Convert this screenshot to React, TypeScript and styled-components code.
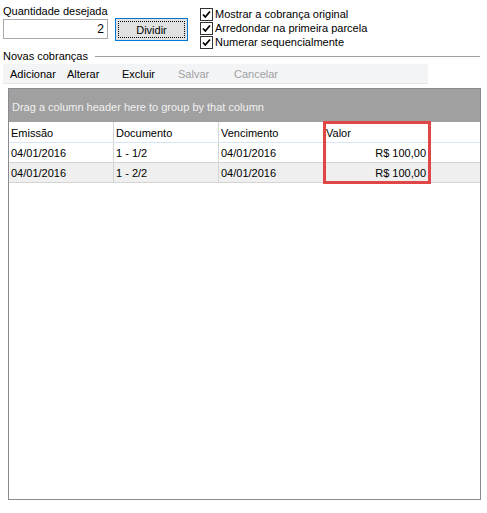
import React from 'react';
import styled, { createGlobalStyle } from 'styled-components';

const GlobalStyle = createGlobalStyle`
  html, body {
    margin: 0;
    padding: 0;
    background: #ffffff;
  }
  body {
    font-family: "Liberation Sans", Arial, sans-serif;
    font-size: 11px;
    color: #000000;
  }
`;

const Page = styled.div`
  width: 487px;
  height: 513px;
  box-sizing: border-box;
  padding: 4px 0 0 3px;
  display: flex;
  flex-direction: column;
  white-space: nowrap;
`;

const TopRow = styled.div`
  display: flex;
  align-items: flex-start;
  height: 44px;
`;

const QtyField = styled.div`
  display: flex;
  flex-direction: column;
  width: 105px;
`;

const Label = styled.span`
  height: 15px;
  line-height: 15px;
`;

const QtyInput = styled.div`
  box-sizing: border-box;
  height: 20px;
  border: 1px solid #a9a9a9;
  background: #ffffff;
  text-align: right;
  padding: 0 3px;
  line-height: 18px;
  font-size: 12px;
`;

const Button = styled.button`
  margin: 14px 0 0 7px;
  box-sizing: border-box;
  width: 73px;
  height: 23px;
  border: 1px solid #0078d7;
  background: #e1e1e1;
  padding: 2px;
  font-family: inherit;
  font-size: 11px;
  color: #000;
`;

const FocusRect = styled.span`
  display: flex;
  align-items: center;
  justify-content: center;
  height: 100%;
  box-sizing: border-box;
  border: 1px dotted #000;
`;

const Checks = styled.div`
  margin: 3px 0 0 12px;
  display: flex;
  flex-direction: column;
`;

const CheckRow = styled.label`
  display: flex;
  align-items: center;
  gap: 2px;
  height: 14px;
`;

const Box = styled.span`
  box-sizing: border-box;
  width: 13px;
  height: 13px;
  border: 1px solid #333;
  background: #fff;
  display: flex;
  align-items: center;
  justify-content: center;
`;

const Legend = styled.div`
  display: flex;
  align-items: center;
  height: 16px;
  padding-right: 7px;
`;

const LegendText = styled.span`
  padding-right: 7px;
`;

const LegendLine = styled.span`
  flex: 1;
  height: 1px;
  background: #a0a0a0;
  margin-top: 1px;
`;

const Toolbar = styled.div`
  width: 425px;
  height: 19px;
  background: #f3f4f6;
  border-bottom: 1px solid #e4e6e8;
  display: flex;
  align-items: center;
`;

const ToolItem = styled.span<{ $w: number; $disabled?: boolean }>`
  width: ${(p) => p.$w}px;
  padding-left: 7px;
  box-sizing: border-box;
  color: ${(p) => (p.$disabled ? '#a0a0a0' : '#000')};
`;

const Grid = styled.div`
  position: relative;
  margin: 4px 0 0 5px;
  width: 473px;
  height: 412px;
  box-sizing: border-box;
  border: 1px solid #8a8a90;
  background: #ffffff;
`;

const GroupPanel = styled.div`
  height: 33px;
  background: #a0a0a0;
  color: #f0f0f0;
  display: flex;
  align-items: center;
  padding: 2px 0 0 3px;
  box-sizing: border-box;
`;

const Row = styled.div<{ $alt?: boolean; $header?: boolean }>`
  display: flex;
  height: ${(p) => (p.$header ? 20 : 19)}px;
  background: ${(p) => (p.$alt ? '#efefef' : '#ffffff')};
  border-bottom: 1px solid ${(p) => (p.$header ? '#d5e5f3' : '#d4d4d4')};
`;

const Cell = styled.div<{ $right?: boolean; $header?: boolean }>`
  width: 105px;
  box-sizing: border-box;
  border-right: 1px solid #d4d4d4;
  padding: ${(p) => (p.$header ? 3 : 1)}px 2px 0;
  line-height: ${(p) => (p.$header ? 17 : 18)}px;
  text-align: ${(p) => (p.$right ? 'right' : 'left')};
  overflow: hidden;
`;

const Highlight = styled.div`
  position: absolute;
  left: 314px;
  top: 32px;
  width: 108px;
  height: 63px;
  box-sizing: border-box;
  border: 3px solid #e04646;
  pointer-events: none;
`;

const Check = () => (
  <Box>
    <svg width="9" height="9" viewBox="0 0 9 9">
      <path d="M1 4.5 L3.3 7 L8 1.5" fill="none" stroke="#000" strokeWidth="1.8" />
    </svg>
  </Box>
);

const options = ['Mostrar a cobrança original', 'Arredondar na primeira parcela', 'Numerar sequencialmente'];
const columns = ['Emissão', 'Documento', 'Vencimento', 'Valor'];

const rows = [
  { emissao: '04/01/2016', doc: '1 - 1/2', venc: '04/01/2016', valor: 'R$ 100,00' },
  { emissao: '04/01/2016', doc: '1 - 2/2', venc: '04/01/2016', valor: 'R$ 100,00' },
];

export default function App() {
  return (
    <>
      <GlobalStyle />
      <Page>
        <TopRow>
          <QtyField>
            <Label>Quantidade desejada</Label>
            <QtyInput>2</QtyInput>
          </QtyField>
          <Button>
            <FocusRect>Dividir</FocusRect>
          </Button>
          <Checks>
            {options.map((o) => (
              <CheckRow key={o}>
                <Check />
                {o}
              </CheckRow>
            ))}
          </Checks>
        </TopRow>
        <Legend>
          <LegendText>Novas cobranças</LegendText>
          <LegendLine />
        </Legend>
        <Toolbar>
          <ToolItem $w={57}>Adicionar</ToolItem>
          <ToolItem $w={55}>Alterar</ToolItem>
          <ToolItem $w={56}>Excluir</ToolItem>
          <ToolItem $w={56} $disabled>Salvar</ToolItem>
          <ToolItem $w={60} $disabled>Cancelar</ToolItem>
        </Toolbar>
        <Grid>
          <GroupPanel>Drag a column header here to group by that column</GroupPanel>
          <Row $header>
            {columns.map((c) => (
              <Cell key={c} $header>{c}</Cell>
            ))}
          </Row>
          {rows.map((r, i) => (
            <Row key={i} $alt={i % 2 === 1}>
              <Cell>{r.emissao}</Cell>
              <Cell>{r.doc}</Cell>
              <Cell>{r.venc}</Cell>
              <Cell $right>{r.valor}</Cell>
            </Row>
          ))}
          <Highlight />
        </Grid>
      </Page>
    </>
  );
}
